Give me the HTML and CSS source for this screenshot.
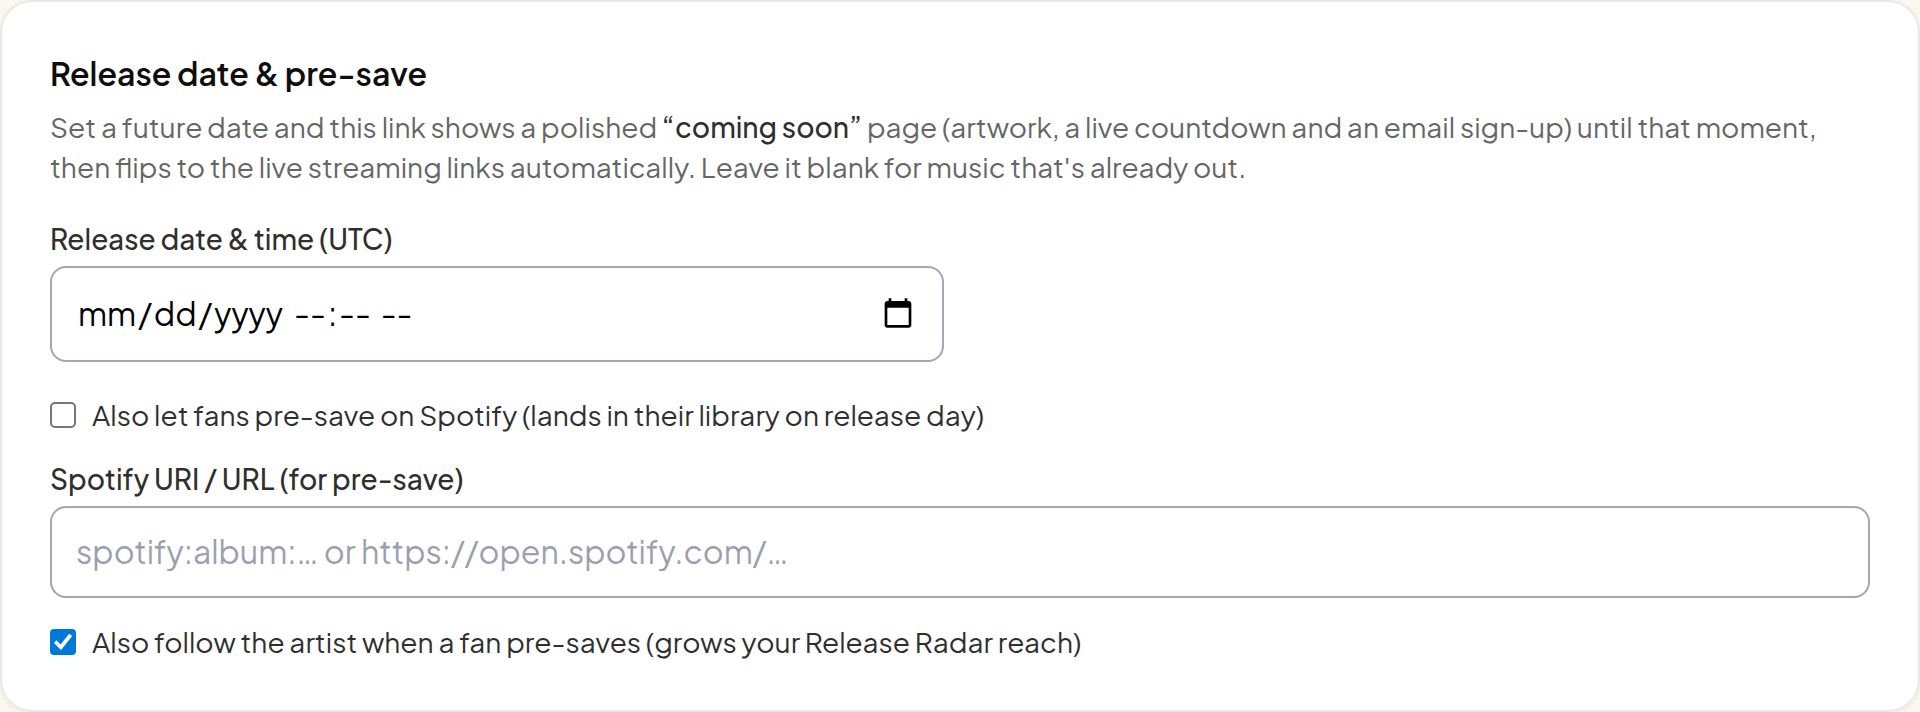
FILE: index.html
```html
<!DOCTYPE html>
<html lang="en">
<head>
<meta charset="utf-8">
<meta name="viewport" content="width=device-width, initial-scale=1">
<title>Release date &amp; pre-save</title>
<link rel="stylesheet" href="styles.css">
</head>
<body>
<form class="card">
  <header class="intro">
    <h2 class="title">Release date &amp; pre-save</h2>
    <p class="description">Set a future date and this link shows a polished <strong class="emphasis">“coming soon”</strong> page (artwork, a live countdown and an email sign-up) until that moment, then flips to the live streaming links automatically. Leave it blank for music that's already out.</p>
  </header>
  <div class="columns">
    <div class="field">
      <label class="label" for="release-date">Release date &amp; time (UTC)</label>
      <div class="input date-time">
        <input class="date-part date-part-day" id="release-date" type="date">
        <input class="date-part" type="time" aria-label="Release time (UTC)">
        <button class="picker" type="button" aria-label="Show date picker">
          <svg class="picker-icon" viewBox="0 0 24 24" aria-hidden="true"><path d="M20 3h-1V1h-2v2H7V1H5v2H4c-1.1 0-2 .9-2 2v16c0 1.1.9 2 2 2h16c1.1 0 2-.9 2-2V5c0-1.1-.9-2-2-2zm0 18H4V8h16v13z"/></svg>
        </button>
      </div>
    </div>
  </div>
  <div class="presave">
    <label class="check"><input class="checkbox" type="checkbox"><span>Also let fans pre-save on Spotify (lands in their library on release day)</span></label>
    <div class="field">
      <label class="label" for="spotify-uri">Spotify URI / URL (for pre-save)</label>
      <input class="input" id="spotify-uri" type="text" placeholder="spotify:album:… or https://open.spotify.com/…">
    </div>
    <label class="check"><input class="checkbox" type="checkbox" checked><span>Also follow the artist when a fan pre-saves (grows your Release Radar reach)</span></label>
  </div>
</form>
</body>
</html>
```

FILE: styles.css
```css
*,
*::before,
*::after {
  box-sizing: border-box;
}

body {
  margin: 0;
  background: #fdf7f0;
  color: #2f2f2f;
  font-family: "Plus Jakarta Sans", Lato, "Open Sans", sans-serif;
  font-size: 28px;
  line-height: 40px;
}

.card {
  display: flex;
  flex-direction: column;
  gap: 32px;
  padding: 48px;
  background: #fff;
  border: 2px solid #e8e8e8;
  border-radius: 32px;
  box-shadow: 0 2px 6px rgba(0, 0, 0, 0.05);
}

.intro {
  display: flex;
  flex-direction: column;
  gap: 11px;
}

.title {
  margin: 0;
  color: #0e0e0e;
  font-size: 32px;
  font-weight: 600;
  line-height: 46px;
}

.description {
  margin: 0;
  color: #666;
}

.emphasis {
  color: #2f2f2f;
  font-weight: 500;
}

.columns {
  display: grid;
  grid-template-columns: 1fr 1fr;
  gap: 32px;
}

.field {
  display: flex;
  flex-direction: column;
  gap: 7px;
}

.label {
  font-weight: 500;
}

.input {
  width: 100%;
  height: 92px;
  padding: 0 24px 2px;
  background: #fff;
  border: 2px solid #a3a5b4;
  border-radius: 16px;
  color: #000;
  font: inherit;
  font-size: 32px;
}

.input::placeholder {
  color: #9ca0ae;
  opacity: 1;
}

.date-time {
  display: flex;
  align-items: center;
  gap: 8px;
  height: 96px;
}

.date-part {
  flex: none;
  padding: 0;
  background: none;
  border: 0;
  color: inherit;
  font: inherit;
}

.date-part-day {
  width: 208px;
}

.date-part::-webkit-calendar-picker-indicator {
  display: none;
}

.date-part::-webkit-datetime-edit {
  padding: 0;
}

.date-part::-webkit-datetime-edit-month-field,
.date-part::-webkit-datetime-edit-day-field,
.date-part::-webkit-datetime-edit-year-field,
.date-part::-webkit-datetime-edit-hour-field,
.date-part::-webkit-datetime-edit-minute-field {
  padding: 0 2px;
}

.date-part::-webkit-datetime-edit-ampm-field {
  padding: 0 2px 0 5px;
}

.picker {
  display: flex;
  margin: 0 4px 0 auto;
  padding: 0;
  background: none;
  border: 0;
  color: #000;
}

.picker-icon {
  width: 32px;
  height: 32px;
  fill: currentColor;
}

.presave {
  display: flex;
  flex-direction: column;
  gap: 24px;
  padding-top: 1px;
}

.check {
  display: flex;
  align-items: center;
  gap: 16px;
}

.checkbox {
  display: grid;
  flex: none;
  width: 26px;
  height: 26px;
  margin: 0;
  appearance: none;
  background: #fff;
  border: 2px solid #767676;
  border-radius: 5px;
}

.checkbox:checked {
  background: #0078d7;
  border-color: #0078d7;
  border-radius: 4px;
}

.checkbox:checked::before {
  content: "";
  background: #fff;
  clip-path: polygon(9% 54%, 20% 42%, 39% 61%, 78% 12%, 92% 23%, 41% 86%);
}
```
